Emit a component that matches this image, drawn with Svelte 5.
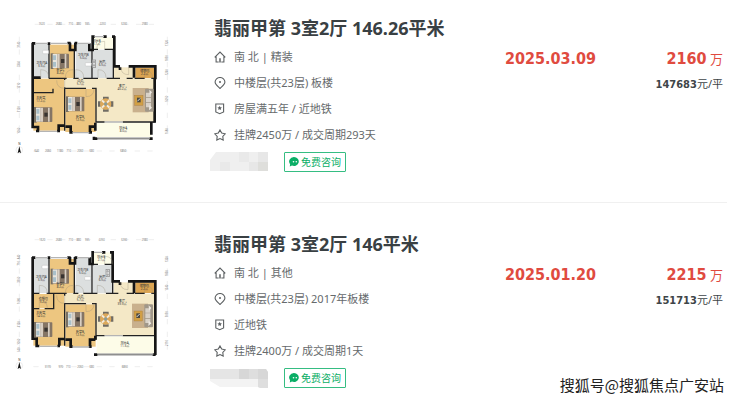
<script>
  const plans = {
    a: {
      view: '0 18 540 432',
      rooms: [
        ['tile', 72, 102, 45, 102], ['wood', 119, 104, 74, 100], ['tile', 197, 102, 48, 102],
        ['cream', 247, 82, 64, 35], ['tile', 249, 119, 59, 85], ['floor', 164, 205, 94, 30],
        ['floor', 258, 205, 175, 130], ['floor', 312, 172, 61, 34], ['dark', 376, 173, 56, 31],
        ['wood', 70, 206, 93, 156], ['wood', 166, 236, 91, 130], ['cream', 260, 338, 164, 43]
      ],
      thick: 'M68 98V351H84V362M66 100H76M68 351H76M113 101H121M180 98V120H196V98M172 99H182M194 99H202M238 100V120H248V80M244 80H254M280 80H290M306 80H315M313 78V169H330M356 169H436V208M434 206V338M424 336V374M146 362V347H164M182 366V350H166M240 366V350H256M256 338V362M330 172V180M372 170V203M78 363H88M141 363H150M178 367H188M236 367H246M252 380V390M254 386H262M418 386H428M68 203H92',
      thin: 'M117 102V204M193 118V205M246 118V204M310 118V204M70 205H92M116 205H170M190 205H206M220 205H264M290 205H330M350 205H368M374 205H404M424 205H434M248 118H264M284 118H312M164 205V210M164 232V362M164 235H228M246 235H258V338M258 336H284M338 336H434M70 248H129V236M256 386H424',
      window: 'M76 100H113M122 100H173M201 100H240M254 80H282M88 364H142M188 368H238M284 336H338M262 384H420',
      doors: [[92, 203, 1, -1], [190, 203, -1, -1], [197, 203, 1, -1], [264, 203, 1, -1], [356, 170, -1, 1], [164, 211, -1, 1], [228, 236, 1, 1], [404, 205, 1, -1], [284, 118, -1, -1]],
      beds: [[122, 130], [72, 291], [168, 259]],
      table: [287, 282],
      sofa: [368, 234],
      basins: [[98, 121], [226, 158]],
      stove: [247, 150],
      labels: [
        ['卫生间A', '3.9㎡', 95, 161], ['卧室C', '8.2㎡', 151, 182], ['卫生间B', '5.0㎡', 220, 138],
        ['阳台B', '2.1㎡', 260, 97], ['厨房', '6.5㎡', 277, 158], ['过道', '5.7㎡', 211, 217],
        ['客厅', '40.2㎡', 336, 232], ['储物间', '2.2㎡', 404, 185], ['主卧室', '17.2㎡', 92, 268],
        ['卧室B', '12.5㎡', 210, 325], ['阳台A', '8.0㎡', 340, 358]
      ],
      top: [43, [[95, 1620], [146, 2680], [182, 710], [206, 880], [232, 935], [278, 2250], [342, 3230], [404, 2980]]],
      bottom: [423, [[80, 640], [114, 2060], [150, 1180], [176, 710], [211, 2060], [245, 680], [340, 6850]]],
      left: [28, [[104, 3140], [162, 3360], [227, 1210], [298, 5120], [362, 1060]]],
      right: [472, [[99, 1320], [145, 1850], [187, 1240], [266, 5050], [364, 1680]]],
      compass: 420
    },
    b: {
      view: '0 9 540 432',
      rooms: [
        ['tile', 72, 87, 45, 105], ['wood', 119, 90, 74, 103], ['tile', 197, 87, 48, 105],
        ['cream', 248, 70, 59, 36], ['tile', 249, 108, 58, 84], ['floor', 164, 194, 94, 30],
        ['floor', 258, 194, 175, 126], ['floor', 311, 160, 62, 35], ['dark', 376, 160, 56, 32],
        ['wood', 70, 195, 60, 43], ['wood', 130, 195, 33, 50], ['wood', 70, 240, 93, 110],
        ['wood', 166, 226, 91, 127], ['cream', 260, 322, 172, 54]
      ],
      thick: 'M68 84V329H80V350M66 86H76M66 328H78M113 86H121M180 84V103H195V84M172 86H182M194 86H202M239 85V105H248V67M244 70H252M276 70H286M300 70H312M308 67V157H330M354 157H436V378M148 350V330H164M182 353V332H166M240 353V332H256M256 320V332M330 160V168M372 158V192M76 351H88M142 351H150M178 353H188M236 353H245M252 377H262M428 377H437',
      thin: 'M117 88V193M193 102V194M246 102V193M308 102V194M70 193H88M110 193H170M190 193H205M220 193H262M288 193H325M350 193H372M374 193H404M424 193H434M248 106H264M284 106H308M164 193V200M164 222V350M164 224H228M246 224H258V332M258 320H284M338 320H434M70 239H88M104 239H131V195M258 377H434',
      window: 'M76 86H113M122 86H173M201 86H240M252 70H278M88 352H142M188 354H238M284 320H338M262 375H430',
      doors: [[88, 193, 1, -1], [190, 193, -1, -1], [197, 193, 1, -1], [262, 193, 1, -1], [354, 158, -1, 1], [164, 199, -1, 1], [228, 224, 1, 1], [404, 193, 1, -1], [284, 106, 1, -1], [88, 238, 1, -1]],
      beds: [[122, 119], [72, 279], [168, 248]],
      table: [287, 270],
      sofa: [366, 224],
      basins: [[96, 109], [224, 143]],
      stove: [288, 121],
      labels: [
        ['卫生间A', '3.9㎡', 94, 148], ['卧室C', '8.2㎡', 151, 168], ['卫生间B', '5.0㎡', 218, 126],
        ['阳台B', '2.1㎡', 274, 86], ['厨房', '6.5㎡', 277, 147], ['过道', '5.7㎡', 211, 206],
        ['客厅', '39.9㎡', 336, 218], ['储物间', '2.2㎡', 403, 173], ['衣帽间', '3.2㎡', 100, 212],
        ['主卧室', '14.0㎡', 92, 255], ['卧室B', '12.5㎡', 210, 312], ['阳台A', '11.3㎡', 344, 344]
      ],
      top: [32, [[97, 1620], [146, 2680], [182, 710], [206, 880], [232, 935], [275, 2250], [342, 3230], [404, 2980]]],
      bottom: [413, [[113, 3170], [152, 970], [175, 710], [211, 2060], [245, 680], [344, 6850]]],
      left: [28, [[84, 840], [103, 710], [152, 3360], [216, 1680], [286, 4120], [338, 1060], [362, 640]]],
      right: [472, [[91, 1320], [133, 1850], [176, 1240], [256, 5050], [342, 2110]]],
      compass: 410
    }
  };

  const homes = [
    {
      title: '翡丽甲第 3室2厅 146.26平米', plan: plans.a,
      facts: [['house', '南 北 | 精装'], ['pin', '中楼层(共23层) 板楼'], ['badge', '房屋满五年 / 近地铁'], ['star', '挂牌2450万 / 成交周期293天']],
      date: '2025.03.09', total: '2160', unit: '147683', agent: 'top'
    },
    {
      title: '翡丽甲第 3室2厅 146平米', plan: plans.b,
      facts: [['house', '南 北 | 其他'], ['pin', '中楼层(共23层) 2017年板楼'], ['badge', '近地铁'], ['star', '挂牌2400万 / 成交周期1天']],
      date: '2025.01.20', total: '2215', unit: '151713', agent: 'bottom'
    }
  ];
</script>

{#snippet icon(kind)}
  <svg class="icon" viewBox="0 0 12 12" aria-hidden="true">
    {#if kind === 'house'}
      <path d="M.7 6.3 6 1l5.3 5.3M2.1 5.4V11h2.6M9.9 5.4V11H7.3" />
      <path d="M6 7.2V11.4" stroke-width="1.5" />
    {:else if kind === 'pin'}
      <path d="M6 11.5C3.4 9 1.1 7.4 1.1 5.1a4.9 4.6 0 0 1 9.8 0c0 2.3-2.3 3.9-4.9 6.4Z" />
      <circle class="solid" cx="6" cy="5" r="1" />
    {:else if kind === 'badge'}
      <path d="M1.8 1h7.8v8L5.7 10.7 1.8 9Z" />
      <path class="solid" d="m5.7 2.8.7 1.4 1.6.2-1.2 1.1.3 1.6-1.4-.8-1.4.8.3-1.6-1.2-1.1 1.6-.2Z" />
    {:else}
      <path d="m6 .9 1.7 3.2 3.6.7-2.5 2.6.4 3.6L6 9.5 2.8 11l.4-3.6L.7 4.8l3.6-.7Z" />
    {/if}
  </svg>
{/snippet}

{#snippet bed([x, y])}
  <g transform="translate({x} {y})">
    <rect x="0" y="0" width="8" height="47" fill="#777064" />
    <rect x="5" y="1" width="50" height="44" rx="2" fill="#857565" />
    <rect x="6" y="2" width="14" height="42" fill="#e8e5dd" />
    <path d="M7 6h9v14H7ZM7 26h9v14H7Z" fill="#aac0c9" />
    <path d="M20 2h7v42h-7ZM42 2h5v42h-5Z" fill="#d8cec2" />
    <path d="M31 17h10v12H31Z" fill="#373330" />
  </g>
{/snippet}

{#snippet floorplan(p)}
  <svg class="plan" viewBox={p.view} role="img" aria-label="户型图">
    {#each p.rooms as [kind, x, y, w, h]}
      <rect class={kind} {x} {y} width={w} height={h} />
    {/each}
    <path class="thin" d={p.thin} />
    <path class="thick" d={p.thick} />
    <path class="window" d={p.window} />
    {#each p.doors as [x, y, dx, dy]}
      <path class="door" d="M{x} {y}v{24 * dy}q{24 * dx} 0 {24 * dx} {-24 * dy}" />
    {/each}
    {#each p.beds as spot}{@render bed(spot)}{/each}
    {#each p.basins as [x, y]}
      <rect {x} {y} width="18" height="10" rx="2" fill="#fff" stroke="#aaa" />
    {/each}
    <g transform="translate({p.stove[0]} {p.stove[1]})" fill="#ddd" stroke="#888" stroke-width="2">
      <rect width="10" height="22" /><circle cx="5" cy="6" r="2" /><circle cx="5" cy="16" r="2" />
    </g>
    <g transform="translate({p.table[0]} {p.table[1]})">
      <path d="M-8-22H9v7H-8ZM-8 16H9v7H-8ZM-23-8h8V8h-8ZM15-8h8V8h-8Z" fill="#706c64" />
      <circle r="17" fill="#dca85a" />
      <path d="M-11-11-4-4M11-11 4-4M-11 11-4 4M11 11 4 4" stroke="#f3ecdf" stroke-width="6" />
      <circle r="5" fill="#8a9c98" />
    </g>
    <g transform="translate({p.sofa[0]} {p.sofa[1]})">
      <rect width="48" height="73" fill="#c9b08d" />
      <rect x="37" y="2" width="26" height="69" rx="3" fill="#a09789" />
      <path d="M40 14h15v13H40ZM40 29h15v14H40ZM40 45h15v13H40Z" fill="#d9d2c8" />
      <path d="M50 5l8 8-7 8ZM50 51l8 8-9 8Z" fill="#eee9e2" />
      <rect x="6" y="22" width="25" height="30" fill="#d19f45" stroke="#9e7538" />
      <rect x="13" y="29" width="11" height="14" fill="#4a4840" />
      <path d="m14 40 9-9" stroke="#ddd" stroke-width="3" />
    </g>
    {#each p.labels as [name, area, x, y]}
      <text class="room" {x} {y}>{name}</text>
      <text class="room" {x} y={y + 9}>{area}</text>
    {/each}
    <path class="ruler" d="M74 {p.top[0]}H432M70 {p.bottom[0]}H432" />
    <path class="ruler" d="M{p.left[0]} 80V382M{p.right[0]} 80V382" />
    {#each [p.top, p.bottom] as [y, marks]}
      {#each marks as [x, size]}
        <text class="size" {x} y={y + 3}>{size}</text>
      {/each}
    {/each}
    {#each [p.left, p.right] as [x, marks]}
      {#each marks as [y, size]}
        <text class="size" transform="translate({x + 3} {y}) rotate(-90)">{size}</text>
      {/each}
    {/each}
    <g transform="translate(28 {p.compass})">
      <text class="north" x="0" y="-15">N</text>
      <circle r="10" fill="#fff" stroke="#ccc" />
      <path d="M0-11 5 10 0 6-5 10Z" fill="#111" />
    </g>
  </svg>
{/snippet}

<main>
  <ul class="homes">
    {#each homes as home}
      <li class="home">
        {@render floorplan(home.plan)}
        <div class="info">
          <h2>{home.title}</h2>
          <ul class="facts">
            {#each home.facts as [kind, text]}
              <li>{@render icon(kind)}<span>{text}</span></li>
            {/each}
          </ul>
          <div class="contact">
            <svg class="agent" viewBox="0 0 58 20" aria-hidden="true">
              {#if home.agent === 'top'}
                <path d="M0 8 6 0H58V19H0Z" fill="#efefef" />
                <path d="M29 0H39V10H29ZM10 10H20V19H10Z" fill="#e9e9e9" />
                <path d="M39 10H48V19H39ZM48 0H58V10H48Z" fill="#e7e7e7" />
                <path d="M48 10H58V19H48Z" fill="#dededb" />
              {:else}
                <path d="M0 1H56L58 4V20H50L48 19H10L0 13Z" fill="#f3f3f3" />
                <path d="M0 1H29V11H0Z" fill="#e5e5e5" />
                <path d="M29 1H56L58 4V11H29Z" fill="#d7d7d7" />
                <path d="M39 1H48V11H39ZM48 11H58V20H50L48 19Z" fill="#dedede" />
              {/if}
            </svg>
            <button type="button">
              <svg viewBox="0 0 10 10" aria-hidden="true">
                <path d="M5 0a4.8 4.5 0 1 1-2 8.6L.8 9.5l.3-2.3A4.8 4.5 0 0 1 5 0Z" fill="#0aae66" />
                <circle cx="4.5" cy="4.7" r=".8" fill="#fff" /><circle cx="7.3" cy="4.7" r=".8" fill="#fff" />
              </svg>
              免费咨询
            </button>
          </div>
        </div>
        <div class="date">{home.date}</div>
        <div class="price">
          <div class="total"><strong>{home.total}</strong> 万</div>
          <div class="unit"><strong>{home.unit}</strong>元/平</div>
        </div>
      </li>
    {/each}
  </ul>
  <div class="credit">搜狐号@搜狐焦点广安站</div>
</main>

<style>
  :global(body) {
    margin: 0;
    background: #fff;
  }
  main {
    position: relative;
    font-family: "Noto Sans", "Noto Sans CJK SC", sans-serif;
    color: #666a6c;
  }
  ul {
    list-style: none;
    margin: 0;
    padding: 0;
  }
  .homes {
    padding-right: 13px;
  }
  .home {
    display: flex;
    align-items: flex-start;
    padding: 16px 4px 30px 10px;
  }
  .home + .home {
    border-top: 1px solid #f0f0f0;
    padding-top: 29px;
    padding-bottom: 12px;
  }
  .plan {
    flex: none;
    width: 180px;
    height: 144px;
  }
  .info {
    flex: 1;
    min-width: 0;
    padding-left: 24px;
  }
  h2 {
    margin: 0 0 4px;
    font-size: 18px;
    line-height: 24px;
    font-weight: 700;
    color: #394043;
    white-space: nowrap;
  }
  .facts li {
    display: flex;
    align-items: center;
    gap: 8px;
    font-size: 11px;
    line-height: 26px;
    white-space: nowrap;
  }
  .icon {
    flex: none;
    width: 12px;
    height: 12px;
    fill: none;
    stroke: #5c6062;
    stroke-width: 1.1;
  }
  .solid {
    fill: #5c6062;
    stroke: none;
  }
  .contact {
    display: flex;
    align-items: center;
    gap: 16px;
    margin: 4px 0 0 -4px;
  }
  .agent {
    width: 58px;
    height: 20px;
  }
  button {
    display: flex;
    align-items: center;
    gap: 2px;
    box-sizing: border-box;
    height: 20px;
    padding: 0 4px;
    border: 1px solid #35bd82;
    border-radius: 1px;
    background: #fff;
    color: #0aae66;
    font-family: inherit;
    font-size: 10px;
    line-height: 18px;
    white-space: nowrap;
  }
  button svg {
    width: 10px;
    height: 10px;
  }
  .date,
  .price {
    padding-top: 31px;
    line-height: 24px;
    color: #e04b3f;
  }
  .date,
  strong {
    font-family: "DejaVu Sans Condensed", "DejaVu Sans", sans-serif;
    font-weight: 700;
  }
  .date,
  .total strong {
    font-size: 16px;
  }
  .price {
    width: 127px;
    text-align: right;
  }
  .total {
    font-size: 13px;
  }
  .unit {
    font-size: 11px;
    line-height: 26px;
    color: #3e4548;
  }
  .credit {
    position: absolute;
    right: 16px;
    bottom: 4px;
    font-family: "Noto Sans CJK SC", sans-serif;
    font-size: 15px;
    line-height: 22px;
    color: #222;
    text-shadow: 0 0 1px #fff;
  }
  .tile { fill: #dcdfdf; }
  .wood { fill: #edc680; }
  .dark { fill: #dca552; }
  .cream { fill: #fdfce8; }
  .floor { fill: #f4e8c6; }
  .thin,
  .thick,
  .window,
  .door,
  .ruler {
    fill: none;
  }
  .thin { stroke: #222; stroke-width: 4; }
  .thick { stroke: #151515; stroke-width: 8; }
  .window { stroke: #b4b4b4; stroke-width: 4; }
  .door { stroke: #948b78; stroke-width: 1; }
  .ruler { stroke: #ccc; stroke-width: 1; stroke-dasharray: 16 22; }
  .room,
  .size,
  .north {
    text-anchor: middle;
    font-size: 9px;
    fill: #333;
  }
  .size {
    font-size: 8px;
    fill: #777;
  }
</style>
